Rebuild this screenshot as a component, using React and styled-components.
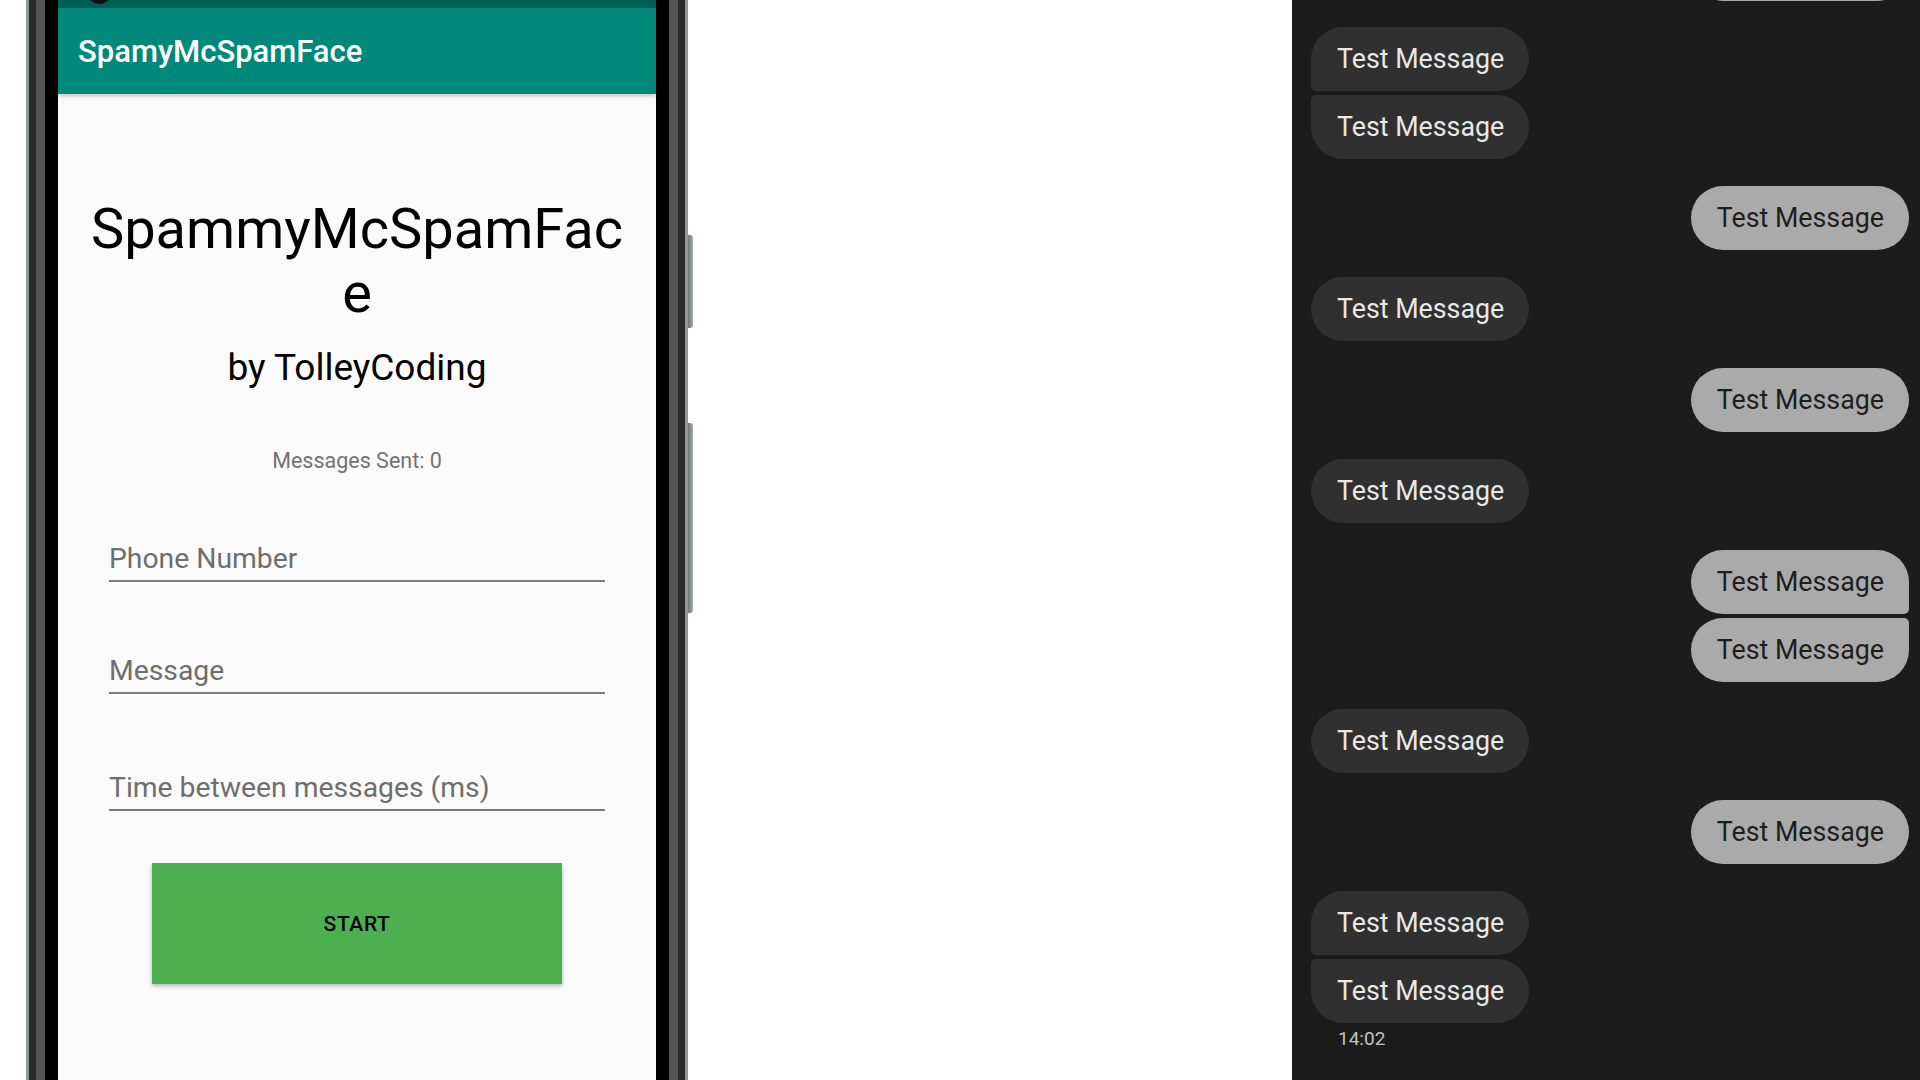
import styled, { createGlobalStyle } from 'styled-components';

const GlobalStyle = createGlobalStyle`
  html, body {
    margin: 0;
    height: 100%;
    background: #ffffff;
  }
  body {
    font-family: Roboto, 'Noto Sans', sans-serif;
    overflow: hidden;
  }
`;

const Page = styled.div`
  display: flex;
  height: 1080px;
  overflow: hidden;
`;

const PhoneArea = styled.div`
  flex: 1;
  display: flex;
  padding-left: 26px;
`;

const Phone = styled.div`
  position: relative;
  width: 662px;
  box-sizing: border-box;
  padding: 0 32px;
  background: linear-gradient(
    to right,
    #8c9994 0 3px,
    #2a2a2a 3px 10px,
    #555555 10px 19px,
    #000000 19px calc(100% - 19px),
    #555555 calc(100% - 19px) calc(100% - 10px),
    #2a2a2a calc(100% - 10px) calc(100% - 3px),
    #8c9994 calc(100% - 3px)
  );
`;

const SideButton = styled.div`
  position: absolute;
  right: -5px;
  top: ${(p) => p.$top}px;
  width: 5px;
  height: ${(p) => p.$h}px;
  border-radius: 0 3px 3px 0;
  background: linear-gradient(to right, #6c7873, #a2ada8);
`;

const Screen = styled.div`
  height: 100%;
  background: #fafafa;
  display: flex;
  flex-direction: column;
  overflow: hidden;
`;

const StatusBar = styled.div`
  position: relative;
  flex-shrink: 0;
  height: 8px;
  background: #005f55;
  overflow: hidden;
`;

const Camera = styled.span`
  position: absolute;
  left: 29px;
  top: -21px;
  width: 25px;
  height: 25px;
  border-radius: 50%;
  background: #111;
`;

const Toolbar = styled.div`
  position: relative;
  z-index: 1;
  flex-shrink: 0;
  height: 86px;
  display: flex;
  align-items: center;
  padding-left: 20px;
  background: #00897b;
  color: #ffffff;
  font-size: 31px;
  font-weight: 500;
  box-shadow: 0 2px 4px rgba(0, 0, 0, 0.22);
`;

const Content = styled.div`
  display: flex;
  flex-direction: column;
  align-items: center;
  padding-top: 103px;
`;

const Heading = styled.h1`
  margin: 0;
  width: 540px;
  font-size: 56px;
  line-height: 64px;
  font-weight: 400;
  text-align: center;
  overflow-wrap: anywhere;
  color: #000;
`;

const Byline = styled.h2`
  margin: 22px 0 0;
  font-size: 37px;
  line-height: 42px;
  font-weight: 400;
  color: #000;
`;

const Counter = styled.div`
  margin-top: 59px;
  font-size: 21.5px;
  line-height: 25px;
  color: #737373;
`;

const Field = styled.input`
  display: block;
  width: 496px;
  height: 40px;
  box-sizing: border-box;
  margin: ${(p) => p.$gap}px 0 0;
  padding: 0 0 6px;
  border: none;
  border-bottom: 2px solid #7b7b7b;
  background: transparent;
  font-family: Roboto, sans-serif;
  font-size: 28.3px;
  line-height: 32px;
  color: #333;
  outline: none;

  &::placeholder {
    color: #6e6e6e;
  }
`;

const StartButton = styled.button`
  margin-top: 52px;
  width: 410px;
  height: 121px;
  border: none;
  background: #4caf50;
  font-family: Roboto, sans-serif;
  font-size: 21px;
  font-weight: 500;
  letter-spacing: 0.6px;
  color: #000;
  box-shadow: 0 2px 4px rgba(0, 0, 0, 0.28);
`;

const Chat = styled.div`
  flex-shrink: 0;
  width: 628px;
  box-sizing: border-box;
  padding: 0 11px 0 19px;
  background: #1c1c1c;
  display: flex;
  flex-direction: column;
  overflow: hidden;
`;

const Bubble = styled.div`
  flex-shrink: 0;
  align-self: ${(p) => (p.$me ? 'flex-end' : 'flex-start')};
  height: 64px;
  box-sizing: border-box;
  display: flex;
  align-items: center;
  padding: 0 25px 0 26px;
  margin-top: ${(p) => p.$gap}px;
  border-radius: 32px;
  font-size: 26.8px;
  background: ${(p) => (p.$me ? '#aaaaaa' : '#303030')};
  color: ${(p) => (p.$me ? '#1e1e1e' : '#e8e8e8')};

  ${(p) => p.$joinBelow && (p.$me ? 'border-bottom-right-radius: 5px;' : 'border-bottom-left-radius: 5px;')}
  ${(p) => p.$joinAbove && (p.$me ? 'border-top-right-radius: 5px;' : 'border-top-left-radius: 5px;')}
`;

// the previous sent bubble, scrolled almost entirely out of view
const CutBubble = styled(Bubble)`
  width: 217px;
`;

const Time = styled.div`
  margin-top: 5px;
  padding-left: 27px;
  font-size: 19px;
  line-height: 22px;
  color: #c4c4c4;
`;

// true = sent by me (right, light), false = received (left, dark)
const thread = [false, false, true, false, true, false, true, true, false, true, false, false];

export default function App() {
  return (
    <>
      <GlobalStyle />
      <Page>
        <PhoneArea>
          <Phone>
            <SideButton $top={235} $h={93} />
            <SideButton $top={423} $h={190} />
            <Screen>
              <StatusBar>
                <Camera />
              </StatusBar>
              <Toolbar>SpamyMcSpamFace</Toolbar>
              <Content>
                <Heading>SpammyMcSpamFace</Heading>
                <Byline>by TolleyCoding</Byline>
                <Counter>Messages Sent: 0</Counter>
                <Field $gap={69} placeholder="Phone Number" />
                <Field $gap={72} placeholder="Message" />
                <Field $gap={77} placeholder="Time between messages (ms)" />
                <StartButton>START</StartButton>
              </Content>
            </Screen>
          </Phone>
        </PhoneArea>
        <Chat>
          <CutBubble $me $gap={-63} />
          {thread.map((me, i) => {
            const prev = thread[i - 1];
            const next = thread[i + 1];
            const joinAbove = i > 0 && prev === me;
            const joinBelow = next === me;
            return (
              <Bubble
                key={i}
                $me={me}
                $gap={i === 0 ? 26 : joinAbove ? 4 : 27}
                $joinAbove={joinAbove}
                $joinBelow={joinBelow}
              >
                Test Message
              </Bubble>
            );
          })}
          <Time>14:02</Time>
        </Chat>
      </Page>
    </>
  );
}
